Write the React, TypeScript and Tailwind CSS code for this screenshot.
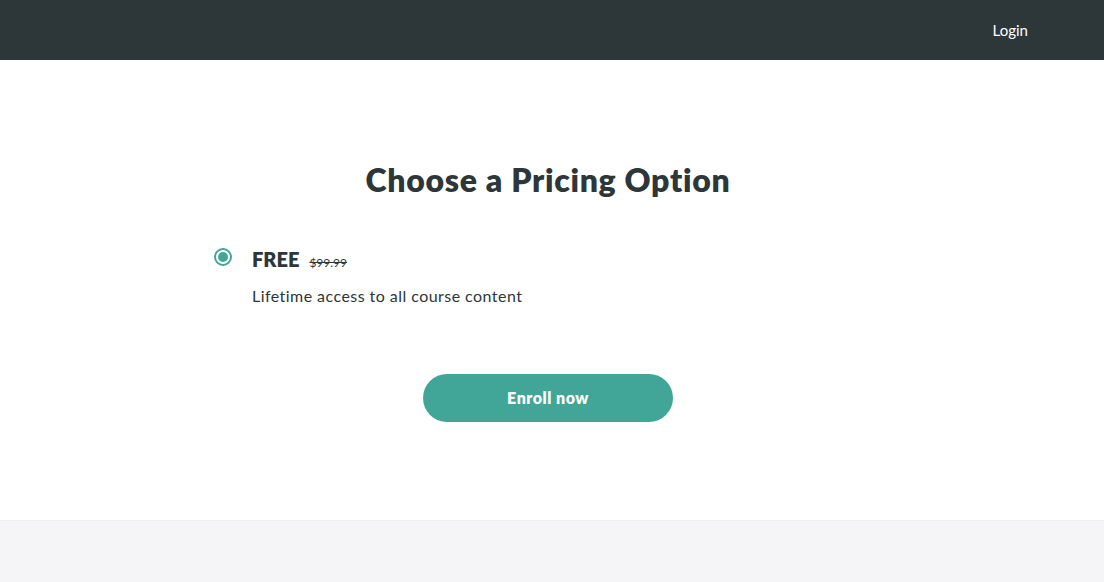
export default function App() {
  return (
    <div className="min-h-[582px] flex flex-col bg-[#f5f5f7] font-['Lato','Open_Sans',sans-serif] text-[#2d3638]">
      {/* Header */}
      <header className="h-[60px] bg-[#2d3638] flex items-center justify-end pr-[76px]">
        <a href="#" className="text-white text-[15px]">Login</a>
      </header>

      {/* Pricing */}
      <main className="bg-white h-[461px] border-b border-[#eeeef0] flex flex-col items-center pt-[104px] pr-[8px]">
        <h1 className="text-[32px] font-extrabold leading-none tracking-[0.7px]">Choose a Pricing Option</h1>

        <div className="w-[668px] mt-[48px] flex gap-[20px]">
          <div className="w-[18px] h-[18px] mt-[4px] rounded-full border-2 border-[#41a597] flex items-center justify-center">
            <div className="w-[10px] h-[10px] rounded-full bg-[#41a597]" />
          </div>
          <div>
            <div className="flex items-baseline gap-[10px]">
              <span className="text-[20px] font-extrabold">FREE</span>
              <span className="text-[12px] line-through text-[#2d3638]">$99.99</span>
            </div>
            <p className="mt-[10px] text-[16px] tracking-[0.45px]">Lifetime access to all course content</p>
          </div>
        </div>

        <button className="mt-[66px] w-[250px] h-[48px] rounded-full bg-[#41a597] text-white text-[16px] font-extrabold tracking-[0.5px]">
          Enroll now
        </button>
      </main>

      <footer className="flex-1 bg-[#f5f5f7]" />
    </div>
  );
}
